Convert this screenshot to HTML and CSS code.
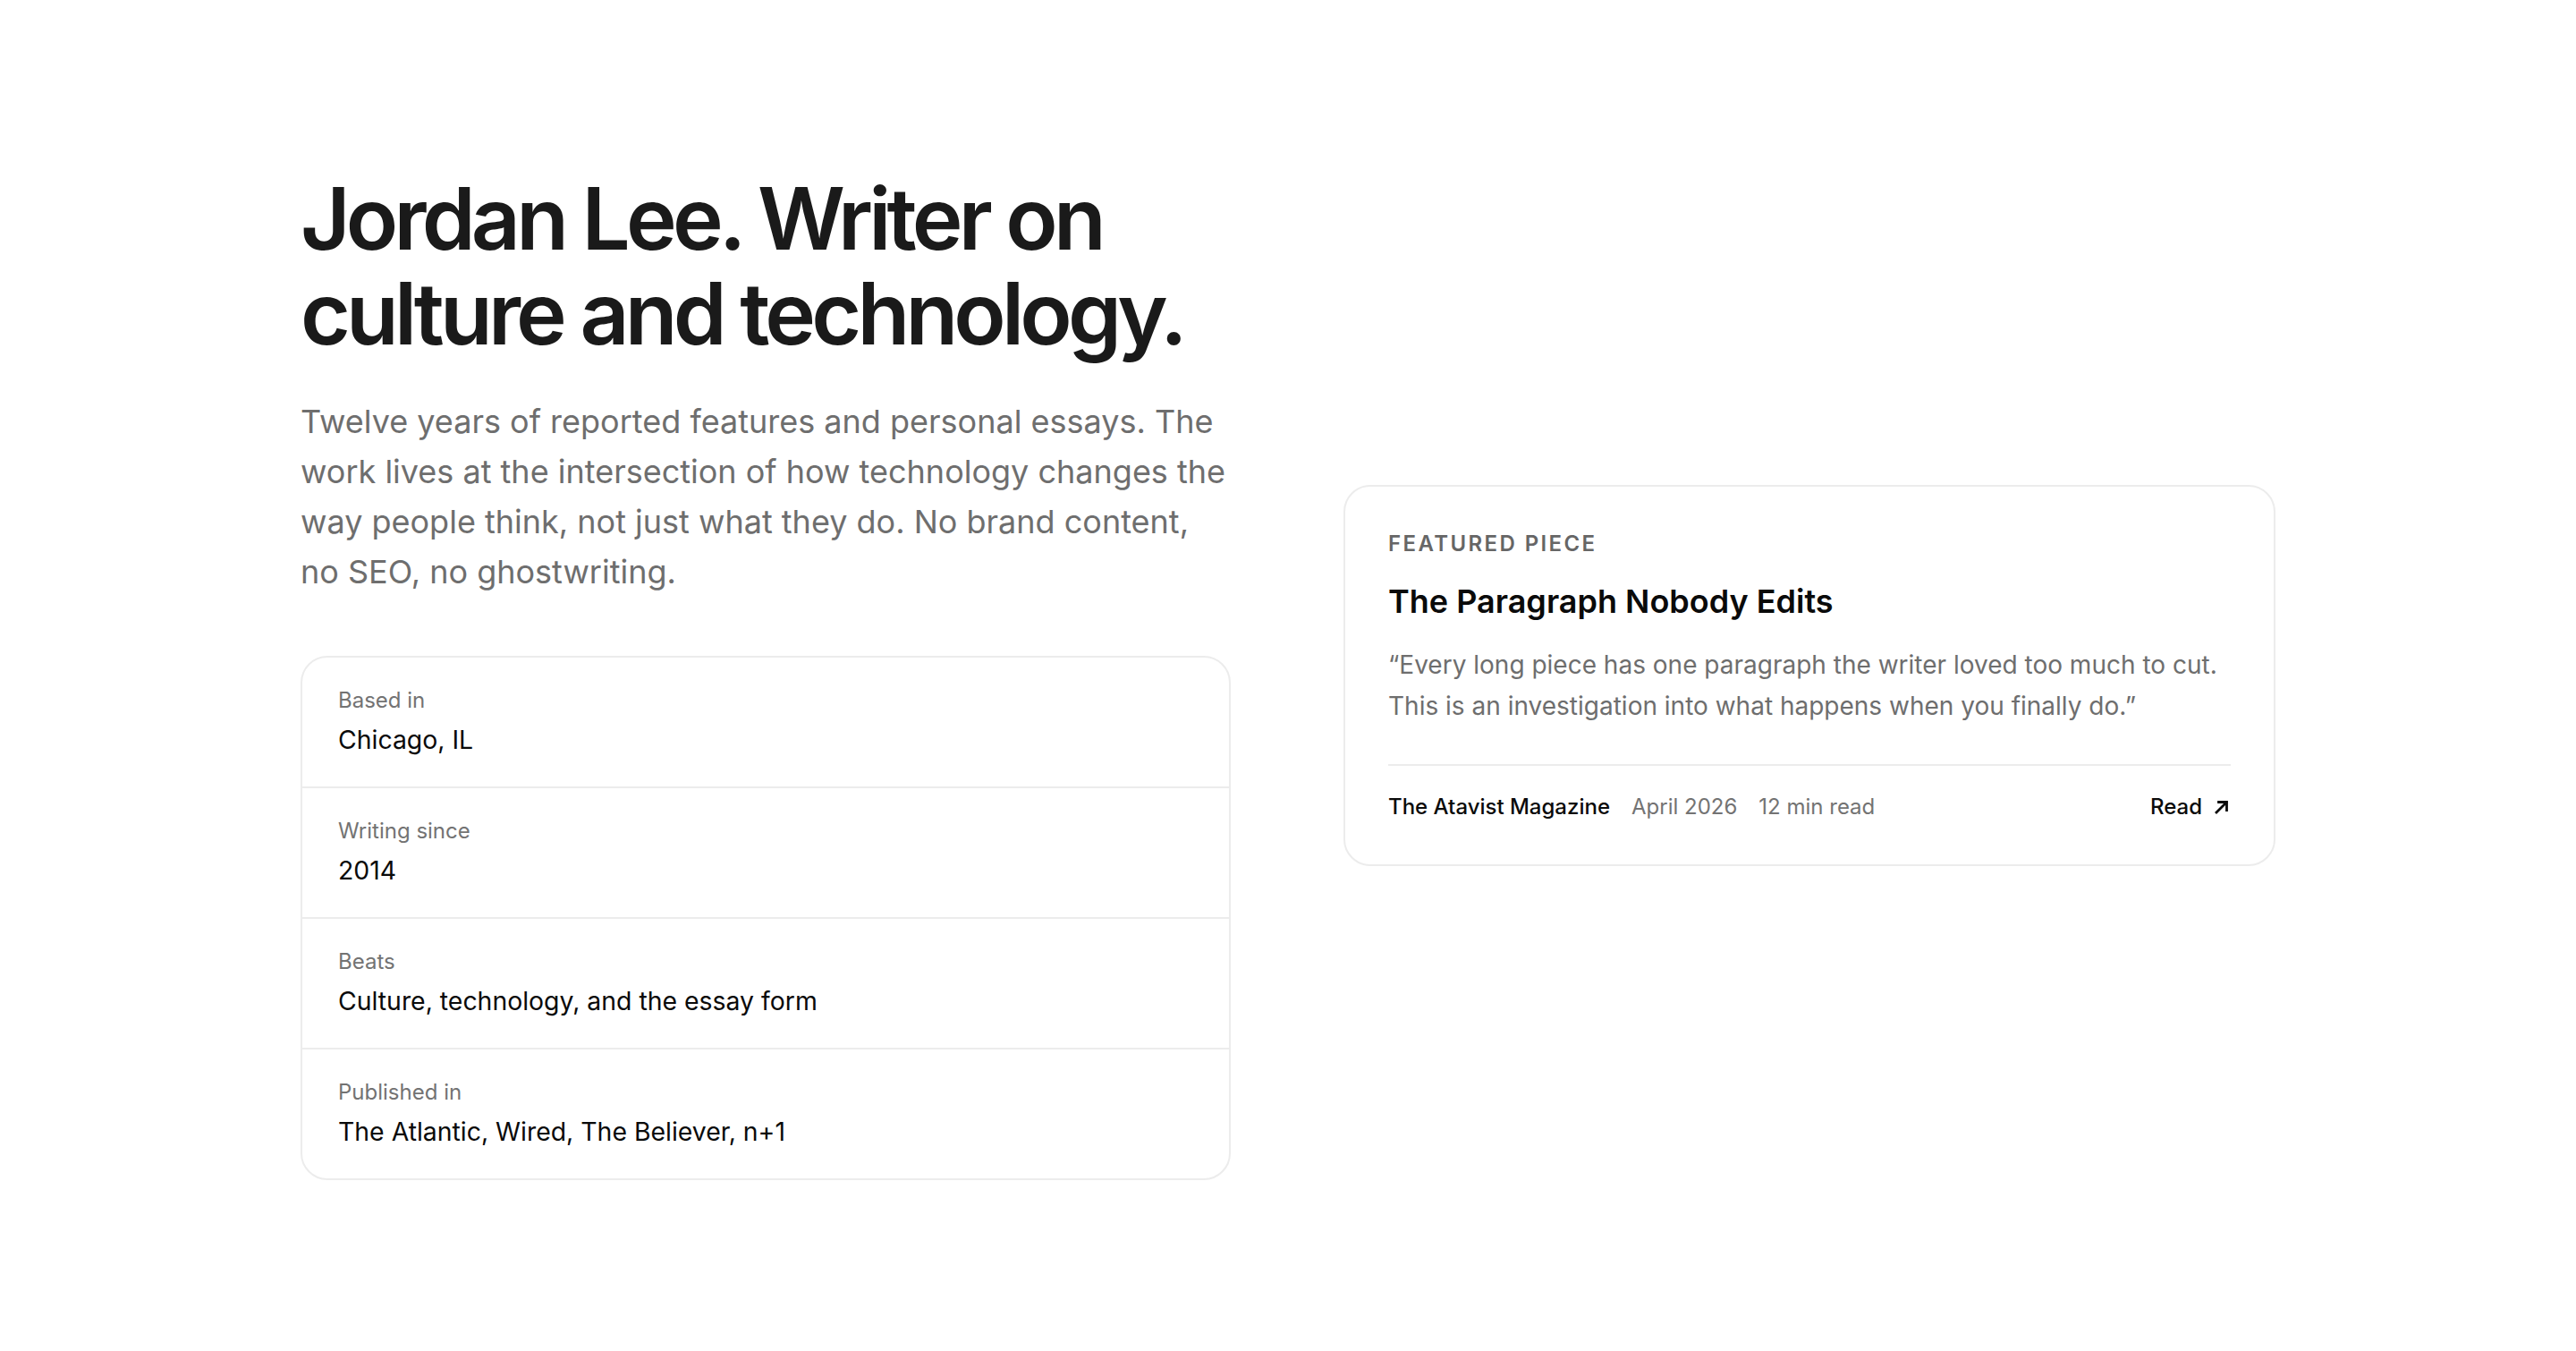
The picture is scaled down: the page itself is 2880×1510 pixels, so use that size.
FILE: index.html
```html
<!DOCTYPE html>
<html lang="en">
<head>
    <meta charset="UTF-8">
    <meta name="viewport" content="width=device-width, initial-scale=1.0">
    <title>Jordan Lee</title>
    <link rel="stylesheet" href="styles.css">
</head>
<body>

    <main class="page">
        <section class="intro">
            <h1>Jordan Lee. Writer on culture and technology.</h1>
            <p class="lede">Twelve years of reported features and personal essays. The work lives at the intersection of how technology changes the way people think, not just what they do. No brand content, no SEO, no ghostwriting.</p>

            <div class="facts">
                <div class="fact-row">
                    <span class="fact-label">Based in</span>
                    <span class="fact-value">Chicago, IL</span>
                </div>
                <div class="fact-row">
                    <span class="fact-label">Writing since</span>
                    <span class="fact-value">2014</span>
                </div>
                <div class="fact-row">
                    <span class="fact-label">Beats</span>
                    <span class="fact-value">Culture, technology, and the essay form</span>
                </div>
                <div class="fact-row">
                    <span class="fact-label">Published in</span>
                    <span class="fact-value">The Atlantic, Wired, The Believer, n+1</span>
                </div>
            </div>
        </section>

        <article class="featured">
            <div class="eyebrow">Featured piece</div>
            <h2>The Paragraph Nobody Edits</h2>
            <p class="quote">“Every long piece has one paragraph the writer loved too much to cut. This is an investigation into what happens when you finally do.”</p>
            <div class="meta">
                <span class="outlet">The Atavist Magazine</span>
                <span class="muted">April 2026</span>
                <span class="muted">12 min read</span>
                <a class="read-link" href="#">Read
                    <svg width="20" height="20" viewBox="0 0 20 20" fill="none" stroke="currentColor" stroke-width="2.8" stroke-linecap="square">
                        <path d="M4 16L15 5"/>
                        <path d="M6.5 4.5H15.5V13.5"/>
                    </svg>
                </a>
            </div>
        </article>
    </main>

</body>
</html>
```

FILE: styles.css
```css
body {
    font-family: 'Inter', 'Noto Sans', sans-serif;
    background-color: #fff;
    color: #0a0a0a;
    margin: 0;
    padding: 0;
    min-height: 100vh;
    display: flex;
    align-items: center;
    justify-content: center;
}

.page {
    width: 2208px;
    display: grid;
    grid-template-columns: 1040px 1fr;
    gap: 126px;
    align-items: center;
}

h1 {
    font-size: 96px;
    font-weight: 600;
    line-height: 106px;
    letter-spacing: -0.05em;
    color: #1a1a1a;
    margin: 0;
}

.lede {
    font-size: 36px;
    line-height: 56px;
    color: #6e6e6e;
    margin: 40px 0 0;
}

.facts {
    margin-top: 66px;
    border: 2px solid #ececec;
    border-radius: 30px;
}

.fact-row {
    display: flex;
    flex-direction: column;
    padding: 32px 40px;
    border-bottom: 2px solid #ececec;
}

.fact-row:last-child {
    border-bottom: none;
}

.fact-label {
    font-size: 24px;
    line-height: 32px;
    color: #737373;
}

.fact-value {
    font-size: 28.4px;
    line-height: 40px;
    margin-top: 8px;
    color: #0a0a0a;
}

/* featured card on the right */
.featured {
    border: 2px solid #ececec;
    border-radius: 30px;
    padding: 50px 48px 46px;
}

.eyebrow {
    font-size: 24px;
    line-height: 28px;
    font-weight: 600;
    letter-spacing: 0.1em;
    text-transform: uppercase;
    color: #666;
}

.featured h2 {
    font-size: 36px;
    line-height: 48px;
    font-weight: 600;
    color: #0a0a0a;
    margin: 26px 0 0;
}

.quote {
    font-size: 28px;
    line-height: 46px;
    color: #6e6e6e;
    margin: 24px 0 0;
}

.meta {
    display: flex;
    align-items: center;
    gap: 24px;
    margin-top: 42px;
    padding-top: 28px;
    border-top: 2px solid #ececec;
    font-size: 24px;
    line-height: 36px;
}

.outlet {
    font-weight: 500;
}

.muted {
    color: #737373;
}

.read-link {
    margin-left: auto;
    display: flex;
    align-items: center;
    gap: 12px;
    font-weight: 500;
    color: #0a0a0a;
    text-decoration: none;
}
```
